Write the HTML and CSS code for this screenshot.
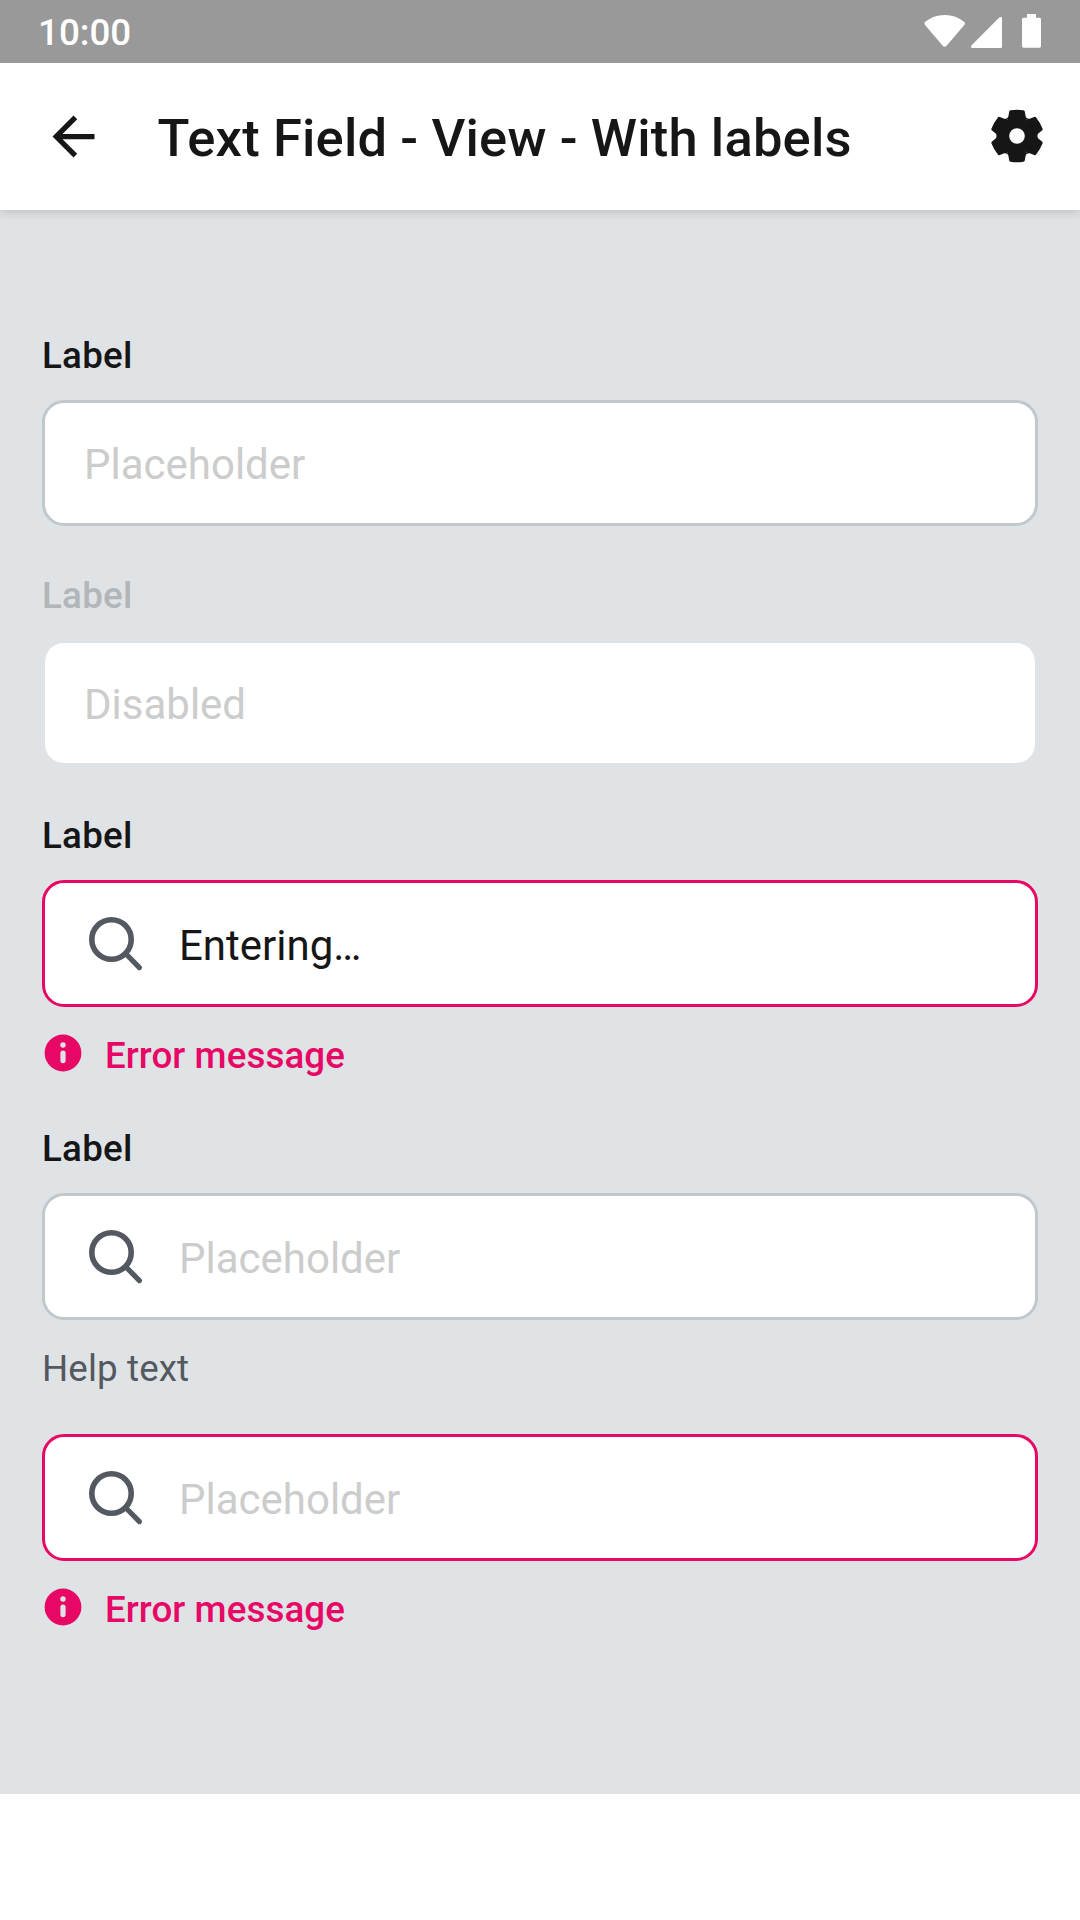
FILE: index.html
```html
<!DOCTYPE html>
<html lang="en">
<head>
<meta charset="utf-8">
<title>Text Field - View - With labels</title>
<link rel="stylesheet" href="styles.css">
</head>
<body>
<svg width="0" height="0" class="defs" aria-hidden="true">
  <defs>
    <path id="tooth" d="M0 0L-30.8-53.3Q-26.5-55-25.8-59L-23.5-73Q-23-77-19.5-77.5Q0-80.5 19.5-77.5Q23-77 23.5-73L25.8-59Q26.5-55 30.8-53.3Z"/>
    <symbol id="search" viewBox="0 0 63 63">
      <circle cx="27.5" cy="27.5" r="19.7" fill="none" stroke="currentColor" stroke-width="5.6"/>
      <path d="M42 42L55.4 55.6" fill="none" stroke="currentColor" stroke-width="5.2" stroke-linecap="round"/>
    </symbol>
    <symbol id="info" viewBox="0 0 42 42">
      <circle cx="21" cy="21" r="18.4" fill="currentColor"/>
      <circle cx="21" cy="13" r="2.7" class="info-mark"/>
      <rect x="18.4" y="18.6" width="5.2" height="12.600" rx="2.6" class="info-mark"/>
    </symbol>
  </defs>
</svg>
<div class="screen">
  <div class="status-bar">
    <span class="time">10:00</span>
    <svg class="status-icons" width="118" height="36" viewBox="612 39 354 108" fill="#fff">
      <path d="M614 67Q640 45 674 45Q708 45 734 67Q736 70 733 75L679 138Q674 143 669 138L615 75Q612 70 614 67Z"/>
      <path d="M753 140Q753 138 755 136L837 53Q841 50 844 51Q846 51 846 54V140Q846 144 842 144H757Q753 144 753 140Z"/>
      <path d="M921 42H948V53H958Q963 53 963 58V138Q963 143.500 958 143.500H911Q906 143.500 906 138V58Q906 53 911 53H921Z"/>
    </svg>
  </div>
  <header class="app-bar">
    <svg class="back" width="63" height="63" viewBox="0 0 24 24"><path d="M20 11H7.830l5.590-5.590L12 4l-8 8 8 8 1.410-1.410L7.830 13H20v-2z"/></svg>
    <h1 class="title">Text Field - View - With labels</h1>
    <svg class="settings" width="54" height="54" viewBox="-81 -81 162 162">
      <circle r="45"/>
      <use href="#tooth"/>
      <use href="#tooth" transform="rotate(60)"/>
      <use href="#tooth" transform="rotate(120)"/>
      <use href="#tooth" transform="rotate(180)"/>
      <use href="#tooth" transform="rotate(240)"/>
      <use href="#tooth" transform="rotate(300)"/>
      <circle r="38" fill="none" stroke="#161616" stroke-width="28"/>
      <circle r="23.500" fill="#fff"/>
    </svg>
  </header>
  <main class="content">
    <section class="group">
      <div class="label">Label</div>
      <div class="field"><span class="hint">Placeholder</span></div>
    </section>
    <section class="group">
      <div class="label disabled">Label</div>
      <div class="field borderless"><span class="hint">Disabled</span></div>
    </section>
    <section class="group">
      <div class="label">Label</div>
      <div class="field with-icon invalid"><svg class="icon" width="63" height="63"><use href="#search"/></svg><span class="value">Entering…</span></div>
      <div class="error"><svg width="42" height="42"><use href="#info"/></svg><span>Error message</span></div>
    </section>
    <section class="group">
      <div class="label">Label</div>
      <div class="field with-icon"><svg class="icon" width="63" height="63"><use href="#search"/></svg><span class="hint">Placeholder</span></div>
      <div class="help">Help text</div>
    </section>
    <section class="group">
      <div class="field with-icon invalid"><svg class="icon" width="63" height="63"><use href="#search"/></svg><span class="hint">Placeholder</span></div>
      <div class="error"><svg width="42" height="42"><use href="#info"/></svg><span>Error message</span></div>
    </section>
  </main>
</div>
</body>
</html>
```
FILE: styles.css
```css
* { box-sizing: border-box; }

body {
  margin: 0;
  background: #fff;
  color: #161616;
  font-family: Roboto, sans-serif;
}

svg { display: block; flex: none; }

.defs { position: absolute; }

.screen {
  display: flex;
  flex-direction: column;
  width: 1080px;
  height: 1920px;
}

.status-bar {
  position: relative;
  z-index: 2;
  display: flex;
  justify-content: space-between;
  height: 63px;
  padding: 13px 42px 0 38px;
  background: #999;
}

.time {
  margin-top: -1px;
  color: #fff;
  font-size: 36.75px;
  font-weight: 500;
  line-height: 41px;
}

.status-bar .status-icons { margin-right: -4px; }

.app-bar {
  position: relative;
  z-index: 1;
  display: flex;
  align-items: center;
  height: 147px;
  padding: 0 36.5px 0 42px;
  background: #fff;
  box-shadow: 0 3px 9px rgba(0, 0, 0, 0.14);
}

.back, .settings { fill: #161616; }

.settings { margin-bottom: 2px; }

.title {
  flex: 1;
  margin: 0;
  padding: 3px 0 0 52.5px;
  font-size: 52.5px;
  font-weight: 500;
  letter-spacing: 0.2px;
  word-spacing: -0.2px;
  line-height: 62px;
  white-space: nowrap;
}

.content {
  display: flex;
  flex-direction: column;
  gap: 48px;
  height: 1584px;
  padding: 124px 42px 0;
  background: #dfe3e6;
}

.label, .help, .error {
  font-size: 36.75px;
  line-height: 43px;
}

.label {
  height: 66px;
  font-weight: 500;
  letter-spacing: 0.25px;
}

.label.disabled { color: #b2b6b8; }

.field {
  display: flex;
  align-items: center;
  height: 126px;
  padding: 0 39px;
  border: 3px solid #c1c8cc;
  border-radius: 22px;
  background: #fff;
  font-size: 42px;
  line-height: 50px;
}

.field.borderless {
  border-color: transparent;
  background-clip: padding-box;
}

.field.with-icon { height: 127px; gap: 32px; }

.field.invalid { border-color: #e70866; }

.icon { color: #545860; }

.hint, .value { padding-top: 3px; }

.with-icon .hint, .with-icon .value { padding-top: 4px; }

.hint { color: #ccc; }

.error {
  display: flex;
  gap: 21px;
  height: 72px;
  padding-top: 25px;
  color: #e70866;
  font-weight: 500;
  letter-spacing: 0.06px;
}

.error span { padding-top: 2px; }

.info-mark { fill: #dfe3e6; }

.help {
  height: 66px;
  padding-top: 27px;
  color: #545860;
  letter-spacing: 0.12px;
}
```
